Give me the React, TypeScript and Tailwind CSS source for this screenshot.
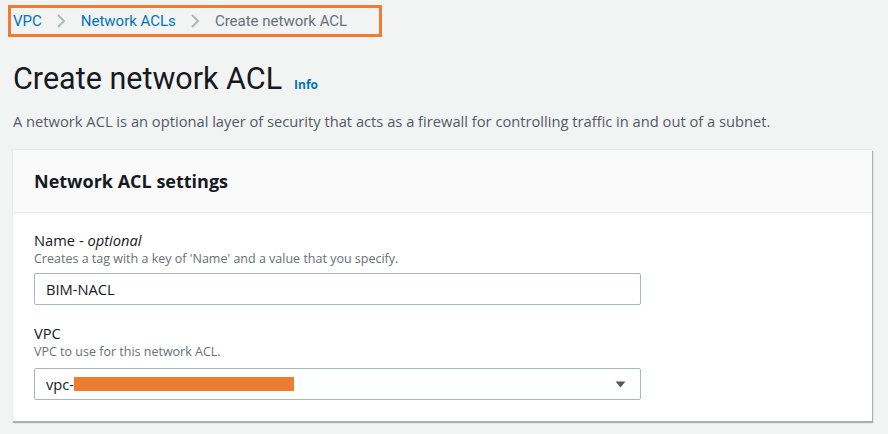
import React from "react";

function Chevron() {
  return (
    <svg width="10" height="16" viewBox="0 0 10 16" className="ml-[14px] mr-[15px]">
      <path d="M2 2 L8 8 L2 14" fill="none" stroke="#aab7b8" strokeWidth="1.8" />
    </svg>
  );
}

export default function App() {
  return (
    <div
      className="w-full min-h-screen bg-[#f2f3f3] text-[#16191f]"
      style={{ fontFamily: "'Open Sans', 'Liberation Sans', Arial, sans-serif" }}
    >
      <div className="pt-[5px] pl-[8px]">
        <div
          className="flex items-center w-[374px] h-[32px] border-[3px] border-[#ee7d32] pl-[2px] text-[15px]"
          style={{ fontFamily: "Roboto, 'Liberation Sans', Arial, sans-serif" }}
        >
          <span className="text-[#0073bb]">VPC</span>
          <Chevron />
          <span className="text-[#0073bb]">Network ACLs</span>
          <Chevron />
          <span className="text-[#687078]">Create network ACL</span>
        </div>
      </div>

      <div className="pl-[13px] mt-[24px] flex items-baseline">
        <h1
          className="text-[30.5px] leading-[36px] font-normal text-[#16191f]"
          style={{ fontFamily: "Roboto, 'Liberation Sans', Arial, sans-serif" }}
        >
          Create network ACL
        </h1>
        <span className="ml-[12px] text-[12px] font-bold text-[#0073bb]">Info</span>
      </div>

      <p className="pl-[13px] mt-[14px] text-[14.7px] leading-[20px] text-[#545b64]">
        A network ACL is an optional layer of security that acts as a firewall for controlling traffic in and out of a subnet.
      </p>

      <div className="ml-[12px] mt-[18px] w-[860px] bg-white border-l border-t border-[#eaeded] shadow-[1px_2px_1px_0_rgba(0,28,36,0.3)]">
        <div className="h-[63px] bg-[#fafafa] border-b border-[#eaeded] flex items-center pl-[21px]">
          <h2 className="text-[18px] font-bold text-[#16191f]">Network ACL settings</h2>
        </div>
        <div className="pl-[21px] pt-[16px] pb-[21px]">
          <div className="text-[14.7px] leading-[22px] text-[#16191f]">
            Name - <i>optional</i>
          </div>
          <div className="text-[12.5px] leading-[16px] text-[#687078]">
            Creates a tag with a key of 'Name' and a value that you specify.
          </div>
          <div className="mt-[6px] w-[607px] h-[32px] border border-[#aab7b8] rounded-[2px] flex items-center pl-[11px] text-[14.7px] text-[#16191f]">
            BIM-NACL
          </div>

          <div className="mt-[17px] text-[14.7px] leading-[22px] text-[#16191f]">VPC</div>
          <div className="text-[12.5px] leading-[16px] text-[#687078]">VPC to use for this network ACL.</div>
          <div className="mt-[8px] w-[607px] h-[32px] border border-[#aab7b8] rounded-[2px] flex items-center pl-[11px] pr-[14px] text-[14.7px] text-[#16191f]">
            <span>vpc-</span>
            <span className="block w-[220px] h-[14px] bg-[#ee7d32]"></span>
            <span className="flex-1"></span>
            <svg width="11" height="7" viewBox="0 0 11 7">
              <path d="M0.5 0.5 L10.5 0.5 L5.5 6.5 Z" fill="#545b64" />
            </svg>
          </div>
        </div>
      </div>
    </div>
  );
}
